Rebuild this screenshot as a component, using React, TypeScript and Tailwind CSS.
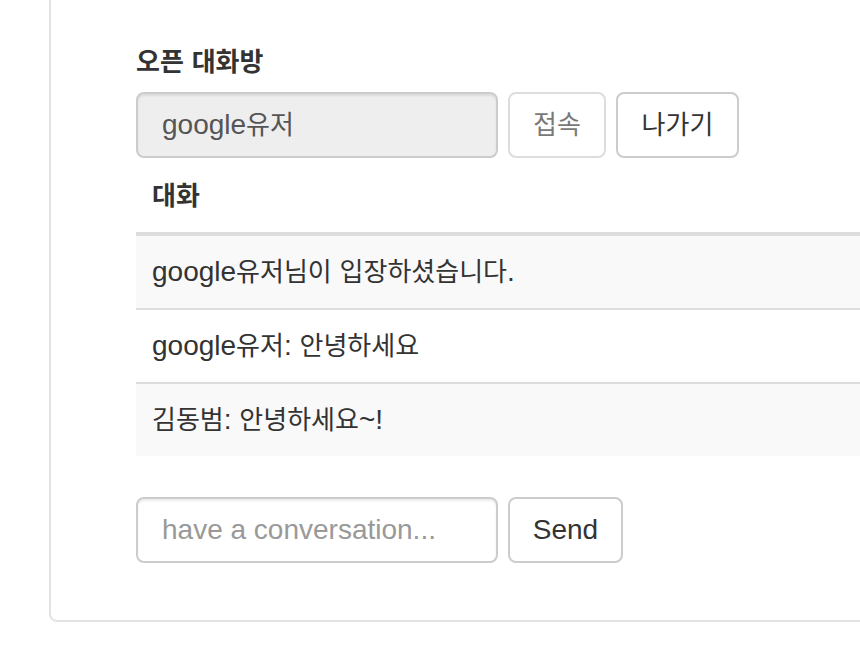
const messages = [
  "google유저님이 입장하셨습니다.",
  "google유저: 안녕하세요",
  "김동범: 안녕하세요~!",
];

const font = {
  fontFamily: '"Liberation Sans", "Noto Sans CJK KR", sans-serif',
};

// latin at 28px, hangul a bit smaller so widths match the original font
function Mixed({ text }: { text: string }) {
  const parts = text.match(/[\uAC00-\uD7A3]+|[^\uAC00-\uD7A3]+/g) || [];
  return (
    <>
      {parts.map((p, i) =>
        /[\uAC00-\uD7A3]/.test(p) ? (
          <span key={i} className="text-[26px] leading-none">
            {p}
          </span>
        ) : (
          <span key={i}>{p}</span>
        ),
      )}
    </>
  );
}

export default function App() {
  return (
    <div className="w-[860px] h-[656px] overflow-hidden bg-white text-[#333] text-[28px] leading-[40px]" style={font}>
      <div className="ml-[49px] w-[900px] border-x-2 border-b-2 border-[#e3e3e3] rounded-b-lg pt-[42px] pb-[57px] pl-[85px]">
        <div className="font-bold mb-[10px]">
          <Mixed text="오픈 대화방" />
        </div>
        <div className="flex gap-[10px]">
          <div className="w-[362px] h-[66px] px-6 flex items-center text-[#555] bg-[#eee] border-2 border-[#ccc] rounded-lg shadow-[inset_0_2px_2px_rgba(0,0,0,0.075)]">
            <Mixed text="google유저" />
          </div>
          <button
            disabled
            className="w-[98px] h-[66px] text-[#333] bg-white border-2 border-[#ccc] rounded-lg opacity-65"
          >
            <Mixed text="접속" />
          </button>
          <button className="w-[123px] h-[66px] text-[#333] bg-white border-2 border-[#ccc] rounded-lg">
            <Mixed text="나가기" />
          </button>
        </div>

        <div className="mt-px">
          <div className="h-[77px] flex items-center px-4 border-b-4 border-[#ddd] font-bold">
            <Mixed text="대화" />
          </div>
          {messages.map((m, i) => (
            <div
              key={i}
              className={`flex items-center px-4 ${
                i === 0 ? "h-[72px]" : "h-[74px] border-t-2 border-[#ddd]"
              } ${i % 2 === 0 ? "bg-[#f9f9f9]" : "bg-white"}`}
            >
              <div>
                <Mixed text={m} />
              </div>
            </div>
          ))}
        </div>

        <div className="flex gap-[10px] mt-[41px]">
          <input
            placeholder="have a conversation..."
            className="w-[362px] h-[66px] px-6 text-[28px] text-[#555] placeholder:text-[#999] bg-white border-2 border-[#ccc] rounded-lg shadow-[inset_0_2px_2px_rgba(0,0,0,0.075)] outline-none"
            style={font}
          />
          <button className="w-[115px] h-[66px] text-[#333] bg-white border-2 border-[#ccc] rounded-lg">
            Send
          </button>
        </div>
      </div>
    </div>
  );
}
